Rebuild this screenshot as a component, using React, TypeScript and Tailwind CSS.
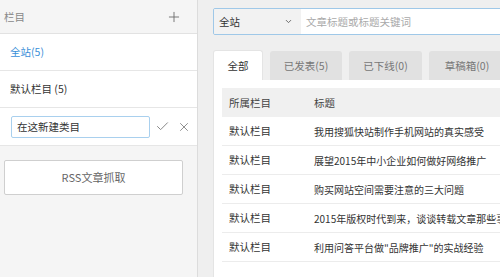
import { Plus, Check, X, ChevronDown } from 'lucide-react';

const font = { fontFamily: '"Microsoft YaHei", "Noto Sans CJK SC", "Liberation Sans", sans-serif' };

const rows = [
    { cat: '默认栏目', title: '我用搜狐快站制作手机网站的真实感受' },
    { cat: '默认栏目', title: '展望2015年中小企业如何做好网络推广' },
    { cat: '默认栏目', title: '购买网站空间需要注意的三大问题' },
    { cat: '默认栏目', title: '2015年版权时代到来，谈谈转载文章那些事' },
    { cat: '默认栏目', title: '利用问答平台做"品牌推广"的实战经验' },
];

const tabs = [
    { label: '全部', w: 'w-[50px]', active: true },
    { label: '已发表(5)', w: 'w-[72px]', active: false },
    { label: '已下线(0)', w: 'w-[73px]', active: false },
    { label: '草稿箱(0)', w: 'w-[76px]', active: false },
];

function Sidebar() {
    return (
        <aside className="flex flex-col w-[198px] shrink-0 bg-[#f5f5f5] border-r border-[#dcdcdc]">
            {/* header */}
            <div className="flex items-center justify-between h-[34px] pl-1 pr-[15px] border-b border-[#e2e2e2] text-[10.5px] text-[#888]">
                <span>栏目</span>
                <Plus size={16} strokeWidth={1.3} className="text-[#666]" />
            </div>
            <div className="flex items-center h-[37px] px-[10px] bg-white border-b border-[#e6e6e6] text-[10.5px] text-[#3a8fd8]">
                全站(5)
            </div>
            <div className="flex items-center h-[37px] px-[10px] bg-white border-b border-[#e6e6e6] text-[10.5px] text-[#333]">
                默认栏目 (5)
            </div>
            <div className="flex items-center h-[38px] pl-[11px] bg-white border-b border-[#e6e6e6]">
                <div className="flex items-center w-[139px] h-[22px] px-[5px] border border-[#a9d0ee] rounded-[2px] text-[10.5px] text-[#333]">
                    在这新建类目
                </div>
                <Check size={15} strokeWidth={1.6} className="ml-[5px] text-[#888]" />
                <X size={14} strokeWidth={1.6} className="ml-[7px] text-[#888]" />
            </div>
            <div className="px-1 pt-[14px]">
                <div className="flex items-center justify-center w-[179px] h-[35px] bg-white border border-[#cfcfcf] rounded-[2px] text-[11px] text-[#666]">
                    RSS文章抓取
                </div>
            </div>
        </aside>
    );
}

export default function App() {
    return (
        <div className="flex w-[500px] h-[277px] overflow-hidden bg-[#efefef]" style={font}>
            <Sidebar />
            <main className="flex flex-col flex-1 min-w-0 pl-[15px] pt-2 overflow-hidden">
                {/* search */}
                <div className="flex w-[320px] h-[27px] shrink-0 border border-[#9fc8e8] rounded-[2px] overflow-hidden">
                    <div className="flex items-center justify-between w-[87px] h-full pl-[5px] pr-[8px] bg-[#f2f2f2] text-[10.5px] text-[#333]">
                        <span>全站</span>
                        <ChevronDown size={9} strokeWidth={2.5} className="text-[#666]" />
                    </div>
                    <div className="flex items-center flex-1 h-full pl-[5px] bg-white text-[10.5px] text-[#aaa]">
                        文章标题或标题关键词
                    </div>
                </div>

                {/* tabs */}
                <div className="flex items-end gap-[7px] h-[30px] mt-[15px] shrink-0">
                    {tabs.map(t => (
                        <div
                            key={t.label}
                            className={
                                t.active
                                    ? `flex items-center justify-center ${t.w} h-[30px] shrink-0 bg-white border border-b-0 border-[#e4e4e4] rounded-t-[3px] text-[10.5px] text-[#333]`
                                    : `flex items-center justify-center ${t.w} h-[29px] shrink-0 bg-[#e1e1e1] rounded-t-[3px] text-[10.5px] text-[#777]`
                            }
                        >
                            {t.label}
                        </div>
                    ))}
                </div>

                {/* panel */}
                <div className="flex-1 w-[320px] bg-white border-l border-[#e4e4e4] pl-2 pt-2">
                    <div className="flex items-center h-[29px] bg-[#f0f0f0] text-[10.5px] text-[#444]">
                        <span className="w-[92px] pl-[7px]">所属栏目</span>
                        <span>标题</span>
                    </div>
                    {rows.map((r, i) => (
                        <div key={i} className="flex items-center h-[29px] border-b border-[#ececec] text-[10px] text-[#333] whitespace-nowrap">
                            <span className="w-[92px] pl-[7px] shrink-0 text-[10.5px]">{r.cat}</span>
                            <span>{r.title}</span>
                        </div>
                    ))}
                </div>
            </main>
        </div>
    );
}
